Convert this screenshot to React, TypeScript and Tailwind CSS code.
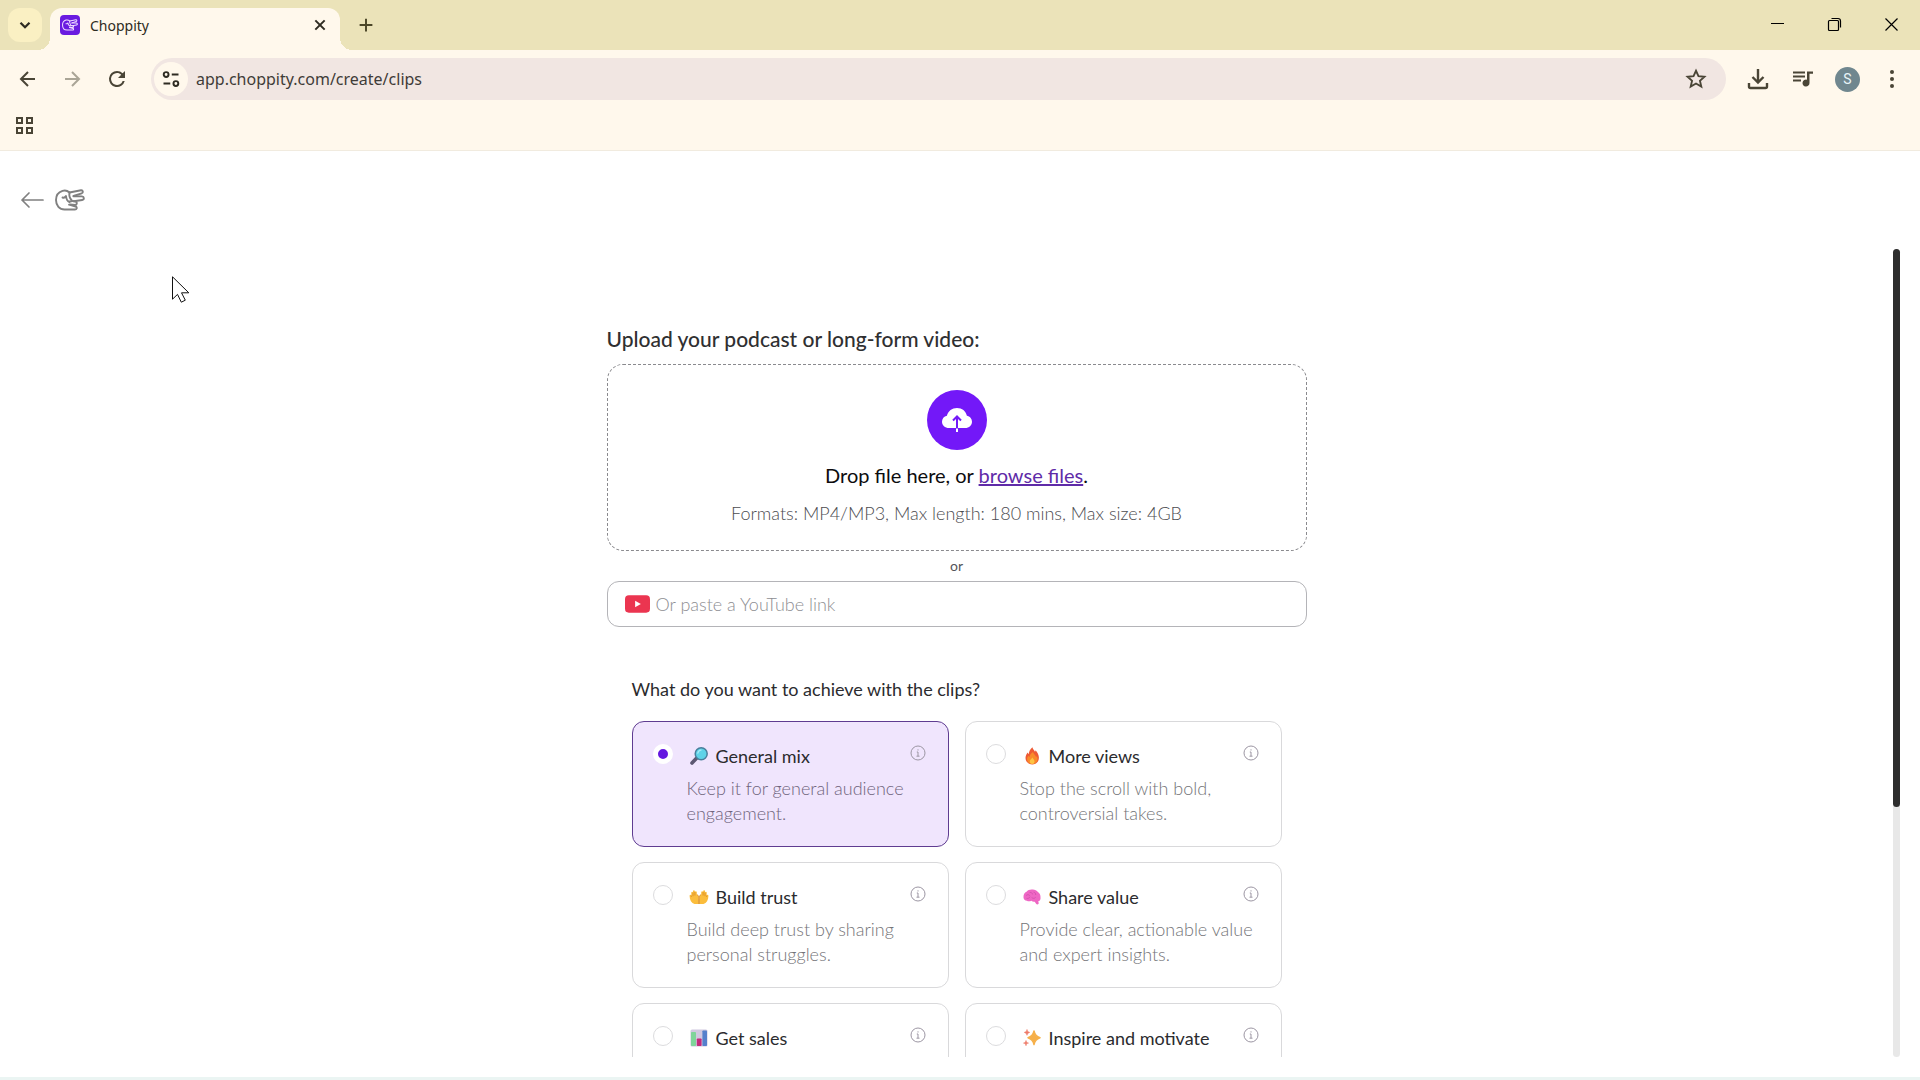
import { useState, type ReactNode } from "react";

type Goal = { id: string; title: string; text: string; icon: ReactNode };

const MagnifierIcon = () => (
  <svg viewBox="0 0 20 20" className="size-5" aria-hidden="true">
    <path d="M7.5 12.2 3 17" stroke="#5d5872" strokeWidth="3.6" strokeLinecap="round" />
    <circle cx="12.2" cy="7.8" r="6" fill="#5fd3e8" stroke="#4a7f9c" strokeWidth="1.5" />
    <path d="M8.8 7.2a3.7 3.7 0 0 1 3.2-3" stroke="#a6ecf6" strokeWidth="1.3" fill="none" strokeLinecap="round" />
  </svg>
);

const FireIcon = () => (
  <svg viewBox="0 0 20 20" className="size-5" aria-hidden="true">
    <path
      d="M10.400 1.200c.5 2.200 2 3 2.600 4.600.4-.5.5-1 .6-1.600 1.900 2.200 3.300 4.800 3.300 7.600 0 4-2.800 6.600-6.600 6.600s-6.800-2.600-6.800-6.400c0-2.300 1-4 2.100-5.600.3.8.6 1.300 1.100 1.700.2-2.800 1.600-5.200 3.700-6.900Z"
      fill="#ee5a34"
    />
    <path
      d="M11 6c.3 2 2.600 3 3.200 5.200.3-.3.5-.7.6-1.100.6 1 .8 2 .8 3 0 3-2.200 5-5.200 5s-5.300-1.900-5.300-4.800c0-1.500.6-2.600 1.300-3.600.3.6.6 1 1.100 1.300C7.700 9 9 7.400 11 6Z"
      fill="#f98a2b"
    />
    <path d="M10.600 11.500c.3 1.300 1.900 2 1.900 3.900 0 1.500-1 2.500-2.300 2.500s-2.400-1-2.400-2.400c0-1.800 1.500-2.400 2.800-4Z" fill="#fdc444" />
  </svg>
);

const HandsIcon = () => (
  <svg viewBox="0 0 20 20" className="size-5" aria-hidden="true">
    <g fill="#fbbd3c" strokeLinejoin="round">
      <path d="M9.700 17H5.500C2.500 16 .6 13 .6 9c0-1.700 1.300-1.700 1.700-.5V5.600c0-1.300 1.500-1.300 1.700 0V4.300c0-1.400 1.700-1.400 1.900 0v.8c.2-1.300 1.800-1.200 1.900.2v2.200c1.200.6 1.900 2 1.900 4z" />
      <path d="M10.300 17h4.200c3-1 4.900-4 4.900-8 0-1.700-1.300-1.700-1.700-.5V5.600c0-1.300-1.500-1.300-1.700 0V4.300c0-1.400-1.700-1.400-1.900 0v.8c-.2-1.300-1.800-1.200-1.900.2v2.200c-1.200.6-1.900 2-1.900 4z" />
      <path
        d="M9.900 17v-5.500c0-2-.6-3.300-2-4M10.100 17v-5.500c0-2 .6-3.300 2-4M2.300 8.500v1.500M4 5.600v3.600M5.900 5v3.500M17.700 8.500v1.500M16 5.600v3.600M14.100 5v3.500"
        fill="none"
        stroke="#d98a24"
        strokeWidth=".8"
      />
    </g>
  </svg>
);

const BrainIcon = () => (
  <svg viewBox="0 0 20 20" className="size-5" aria-hidden="true">
    <path
      d="M1.500 10.500C1.300 7.600 2.600 5.600 4.500 4.800 5.800 3 8 2.300 10.200 2.500c2.300-.2 4.500.7 5.700 2.500 1.800 1 2.800 3.200 2.600 5.400.3 2-.7 3.600-2.300 3.900l.5 1.700c.3 1.400-1.800 1.900-2.600.7l-1.400-2c-1.500.2-2.500-.2-3.300-.9-1.500.7-3.300.8-4.500 0-2-.2-3.300-1.500-3.400-3.300Z"
      fill="#ee67c4"
    />
    <path
      d="M4.500 8.200c1-.9 2.200-.7 3 .2M8 5.500c1.200-.3 2.200.3 2.500 1.500M12 5.300c1.300.2 1.900 1.300 1.700 2.300M5 11.500c1.300.2 2.400-.4 2.900-1.500M10 10.800c1.200.9 2.500.8 3.400-.2"
      fill="none"
      stroke="#d450ae"
      strokeWidth=".9"
      strokeLinecap="round"
    />
  </svg>
);

const ChartIcon = () => (
  <svg viewBox="0 0 20 20" className="size-5" aria-hidden="true">
    <rect x="1.500" y="1.500" width="17" height="17" rx="1.500" fill="#d0c8e0" />
    <rect x="2" y="4" width="5" height="14" rx=".8" fill="#7fd49a" />
    <rect x="7.800" y="10.500" width="4.800" height="7.500" rx=".8" fill="#c42a7c" />
    <rect x="13.400" y="2.500" width="4.600" height="15.500" rx=".8" fill="#5580cc" />
  </svg>
);

const SparklesIcon = () => (
  <svg viewBox="0 0 20 20" className="size-5" aria-hidden="true">
    <path d="M12 3c.8 4.200 2.200 5.600 6 6.700-3.800 1.200-5.200 2.600-6 6.800-.8-4.200-2.200-5.600-6-6.800 3.800-1.100 5.200-2.500 6-6.700Z" fill="#f6b04a" stroke="#f6b04a" strokeWidth="1.500" strokeLinejoin="round" />
    <path d="M5 1.500c.4 1.800 1 2.400 2.700 2.900C6 4.900 5.400 5.500 5 7.300c-.4-1.800-1-2.400-2.700-2.900C4 3.900 4.600 3.300 5 1.500ZM4 12.500c.3 1.600.9 2.200 2.500 2.600-1.600.4-2.200 1-2.500 2.600-.3-1.600-.9-2.200-2.500-2.600 1.600-.4 2.200-1 2.500-2.600Z" fill="#ee7a68" stroke="#ee7a68" strokeWidth=".6" strokeLinejoin="round" />
  </svg>
);

const goals: Goal[] = [
  { id: "general", title: "General mix", text: "Keep it for general audience engagement.", icon: <MagnifierIcon /> },
  { id: "views", title: "More views", text: "Stop the scroll with bold, controversial takes.", icon: <FireIcon /> },
  { id: "trust", title: "Build trust", text: "Build deep trust by sharing personal struggles.", icon: <HandsIcon /> },
  { id: "value", title: "Share value", text: "Provide clear, actionable value and expert insights.", icon: <BrainIcon /> },
  { id: "sales", title: "Get sales", text: "", icon: <ChartIcon /> },
  { id: "inspire", title: "Inspire and motivate", text: "", icon: <SparklesIcon /> },
];

function HandLogo({ className }: { className: string }) {
  return (
    <svg viewBox="0 0 30 22" className={className} fill="none" stroke="currentColor" strokeWidth="1.900" strokeLinecap="round" strokeLinejoin="round" aria-hidden="true">
      <path d="M14.500 3.500C12.500 1.600 10 1 7.500 1.800 3.500 3 1 6.500 1 11c0 5.500 3.500 9.500 8.500 9.500H20c1.800 0 2.200-1.700 1.200-3" />
      <path d="M14.500 3.500 26 1.300c2-.3 2.600 2.400.7 3L18.500 7" />
      <path d="M18.500 7.200 27 7.400c2.300.1 2.500 3.300.2 3.600l-8.400 1.300" />
      <path d="M7.500 8.500c1.800.6 2.800-.1 3.500-1.500.3 3.200 1.300 5.200 3.500 6" />
      <path d="M14.500 3.500c-.5 3 .5 6 2 7.500" />
      <path d="M14.800 12.500c2.500-.8 5-.3 6.500.5 1.200 1.200.3 2.900-1.200 2.900l-5-.5M14 15.700l6.700 1.800" />
    </svg>
  );
}

function Svg({ children, className = "size-6", width = 2 }: { children: ReactNode; className?: string; width?: number }) {
  return (
    <svg viewBox="0 0 24 24" className={className} fill="none" stroke="currentColor" strokeWidth={width} aria-hidden="true">
      {children}
    </svg>
  );
}

function BrowserTabs() {
  return (
    <div className="flex h-[50px] items-end bg-[#ebe3b9] text-[#2e2b22]">
      <button aria-label="Search tabs" className="mb-2 ml-2 flex size-[34px] items-center justify-center rounded-xl bg-[#faf0c3]">
        <Svg className="size-[18px]" width={3}>
          <path d="m6 9 6 6 6-6" />
        </Svg>
      </button>
      <div className="relative ml-2 flex h-[42px] w-[290px] items-center rounded-t-xl bg-[#fff8ec] pr-3 pl-[10px]">
        <span className="absolute bottom-0 -left-3 size-3 bg-[radial-gradient(circle_at_0_0,transparent_12px,#fff8ec_12px)]" />
        <span className="absolute -right-3 bottom-0 size-3 bg-[radial-gradient(circle_at_100%_0,transparent_12px,#fff8ec_12px)]" />
        <span className="mb-2 flex size-5 items-center justify-center rounded bg-[#6a1be0] text-[#f0dcff]">
          <HandLogo className="h-3 w-4" />
        </span>
        <span className="mb-[6px] ml-[10px] flex-1 font-['Noto_Sans','Open_Sans',sans-serif] text-sm leading-5">Choppity</span>
        <button aria-label="Close tab" className="mb-2">
          <Svg className="size-4" width={3}>
            <path d="m5 5 14 14M19 5 5 19" />
          </Svg>
        </button>
      </div>
      <button aria-label="New tab" className="mb-4 ml-[17px] text-[#4c4728]">
        <Svg className="size-[18px]" width={2.600}>
          <path d="M12 3.500v17M3.500 12h17" />
        </Svg>
      </button>
      <div className="mb-[18px] ml-auto flex items-center gap-[42px] pr-[21px] text-black">
        <button aria-label="Minimize">
          <svg viewBox="0 0 15 15" className="size-[15px]" fill="none" stroke="currentColor" aria-hidden="true">
            <path d="M1 6.500h13" />
          </svg>
        </button>
        <button aria-label="Restore">
          <svg viewBox="0 0 15 15" className="size-[15px]" fill="none" stroke="currentColor" strokeWidth="1.200" aria-hidden="true">
            <rect x="1.500" y="3.500" width="10" height="10" rx="1" />
            <path d="M4.500 1.500h6.500a2.500 2.500 0 0 1 2.500 2.500v6.500" />
          </svg>
        </button>
        <button aria-label="Close window">
          <svg viewBox="0 0 15 15" className="size-[15px]" fill="none" stroke="currentColor" strokeWidth="1.200" aria-hidden="true">
            <path d="m1.500 1.500 12 12M13.500 1.500l-12 12" />
          </svg>
        </button>
      </div>
    </div>
  );
}

function Toolbar() {
  return (
    <div className="border-b border-[#f1ebdf] bg-[#fff8ec] text-[#4a4536]">
      <div className="flex items-center pt-2 pr-4 pl-4">
        <button aria-label="Back">
          <Svg width={2}>
            <path d="M19 12H5M12 5l-7 7 7 7" />
          </Svg>
        </button>
        <button aria-label="Forward" className="ml-5 text-[#aaa596]">
          <Svg width={2}>
            <path d="M5 12h14M12 5l7 7-7 7" />
          </Svg>
        </button>
        <button aria-label="Reload" className="ml-[21px]">
          <svg viewBox="0 0 24 24" className="size-6" fill="currentColor" aria-hidden="true">
            <path d="M17.650 6.350A7.960 7.960 0 0 0 12 4a8 8 0 1 0 7.730 10h-2.080A6 6 0 1 1 12 6c1.660 0 3.140.69 4.220 1.780L13 11h7V4z" />
          </svg>
        </button>
        <div className="ml-[22px] flex h-[42px] flex-1 items-center rounded-full bg-[#f1e6e2] pr-[19px] pl-[3px]">
          <button aria-label="View site information" className="flex size-[34px] items-center justify-center rounded-full bg-[#fff8ec] text-[#2e2b22]">
            <Svg className="size-[18px]" width={2.600}>
              <circle cx="5.500" cy="6" r="3.200" />
              <path d="M13 6h9M2 18h9" />
              <circle cx="18.500" cy="18" r="3.200" />
            </Svg>
          </button>
          <input
            aria-label="Address"
            defaultValue="app.choppity.com/create/clips"
            className="ml-2 min-w-0 flex-1 bg-transparent font-['Noto_Sans','Open_Sans',sans-serif] text-base leading-6 text-[#3f3c38] outline-none"
          />
          <button aria-label="Bookmark this page">
            <Svg className="size-[22px]" width={2}>
              <path d="m12 3 2.700 6 6.500.6-4.900 4.300 1.500 6.400L12 16.900l-5.800 3.400 1.500-6.400L2.800 9.600 9.300 9z" />
            </Svg>
          </button>
        </div>
        <button aria-label="Downloads" className="ml-5">
          <Svg width={2.400}>
            <path d="M12 2v13M6.500 10l5.500 5.500L17.500 10M3 16v3.500c0 1 .5 1.500 1.500 1.500h15c1 0 1.500-.5 1.500-1.500V16" />
          </Svg>
        </button>
        <button aria-label="Media controls" className="ml-[21px]">
          <svg viewBox="0 0 24 24" className="size-6" fill="currentColor" aria-hidden="true">
            <path d="M2 4.500h12v2H2zM2 8.500h12v2H2zM2 12.500h8v2H2zM16 4.500h6v2.300h-3.500V16a3.500 3.500 0 1 1-2.500-3.300z" />
          </svg>
        </button>
        <button aria-label="Profile" className="ml-5 flex size-[25px] items-center justify-center rounded-full bg-[#70878f] font-[Roboto,sans-serif] text-sm text-[#e8f4f8]">
          S
        </button>
        <button aria-label="Menu" className="ml-5">
          <svg viewBox="0 0 24 24" className="size-6" fill="currentColor" aria-hidden="true">
            <circle cx="12" cy="5" r="2" />
            <circle cx="12" cy="12" r="2" />
            <circle cx="12" cy="19" r="2" />
          </svg>
        </button>
      </div>
      <div className="flex h-[50px] items-center pl-[14px]">
        <button aria-label="Apps">
          <svg viewBox="0 0 20 20" className="size-5" fill="none" stroke="currentColor" strokeWidth="2" aria-hidden="true">
            <path d="M3 3h5v5H3zM13 3h5v5h-5zM3 13h5v5H3zM13 13h5v5h-5z" />
          </svg>
        </button>
      </div>
    </div>
  );
}

function GoalCard({ goal, checked, onPick }: { goal: Goal; checked: boolean; onPick: () => void }) {
  return (
    <div className={checked ? "flex h-[126px] rounded-xl border border-[#5f3c91] bg-[#f0e5fd] pr-[22px] pl-5" : "flex h-[126px] rounded-xl border border-[#d9d9db] bg-white pr-[22px] pl-5"}>
      <input
        type="radio"
        name="goal"
        id={goal.id}
        checked={checked}
        onChange={onPick}
        className="mt-[22px] size-5 shrink-0 appearance-none rounded-full border border-[#dcdcde] bg-white checked:border-[5px] checked:border-white checked:bg-[#6417e0]"
      />
      <label htmlFor={goal.id} className="ml-[14px] min-w-0 flex-1 pt-[22px]">
        <span className="flex items-center gap-[7px] pl-[2px] text-lg leading-6 text-[#2b2b2e]">
          {goal.icon}
          {goal.title}
        </span>
        {goal.text && (
          <span className={checked ? "mt-2 -mr-5 block text-lg leading-[25px] font-light text-[#6f647c]" : "mt-2 -mr-5 block text-lg leading-[25px] font-light text-[#747478]"}>{goal.text}</span>
        )}
      </label>
      <button aria-label={`About ${goal.title}`} className="mt-[23px] size-4 shrink-0 text-[#9c96a3]">
        <svg viewBox="0 0 16 16" className="size-4" fill="none" stroke="currentColor" aria-hidden="true">
          <circle cx="8" cy="8" r="7" />
          <path d="M6.800 7H8v4M6.500 11.200h3M8 4.300v1.200" />
        </svg>
      </button>
    </div>
  );
}

export default function App() {
  const [picked, setPicked] = useState("general");
  return (
    <div className="flex h-screen flex-col bg-white font-[Lato,sans-serif]">
      <BrowserTabs />
      <Toolbar />
      <header className="flex h-[98px] shrink-0 items-center gap-[11px] pl-5 text-[#808080]">
        <a href="#back" aria-label="Go back">
          <svg viewBox="0 0 24 24" className="size-6" fill="none" stroke="currentColor" strokeWidth="1.700" strokeLinecap="round" strokeLinejoin="round" aria-hidden="true">
            <path d="M23 12H2M9 5l-7 7 7 7" />
          </svg>
        </a>
        <a href="#home" aria-label="Home">
          <HandLogo className="h-[22px] w-[30px]" />
        </a>
      </header>
      <div className="flex min-h-0 flex-1 pr-5">
        <main className="min-h-0 flex-1 overflow-y-auto pl-5 [scrollbar-width:none]">
          <div className="mx-auto max-w-[700px] pt-[75px]">
            <h1 className="text-[21px] leading-[30px] font-medium text-[#2f2f31]">Upload your podcast or long-form video:</h1>
            <section className="mt-[10px] flex h-[187px] flex-col items-center rounded-2xl border border-dashed border-[#8a8a8e] pt-[25px]">
              <div className="flex size-[60px] items-center justify-center rounded-full bg-[#7318f8]">
                <svg viewBox="0 0 30 26" className="h-[26px] w-[30px]" aria-hidden="true">
                  <path d="M7 21C3 21 0 18.300 0 14.700c0-3 2-5.400 4.900-6C6.200 4 10 1 15 1c5.200 0 8.700 3 9.900 7.700 2.900.5 5.100 3 5.100 6 0 3.500-2.900 6.300-6.800 6.300z" fill="#fff" />
                  <path d="M15 21V10M11 13.500l4-4 4 4" fill="none" stroke="#7318f8" strokeWidth="2" />
                  <path d="M14 21.500h2V25h-2z" fill="#fff" />
                </svg>
              </div>
              <p className="mt-[10px] text-xl leading-[30px] text-[#0c0c0e]">
                Drop file here, or{" "}
                <a href="#browse" className="text-[#5f2ba8] underline">
                  browse files
                </a>
                .
              </p>
              <p className="mt-2 text-lg leading-[30px] font-light text-[#4c4c50]">Formats: MP4/MP3, Max length: 180 mins, Max size: 4GB</p>
            </section>
            <p className="py-[5px] text-center text-sm leading-5 text-[#55555a]">or</p>
            <div className="flex h-[46px] items-center gap-[6px] rounded-xl border border-[#b4b4b8] px-4">
              <svg viewBox="0 0 26 18" className="ml-px h-[18px] w-[25px]" aria-hidden="true">
                <rect width="26" height="18" rx="4" fill="#eb3550" />
                <path d="m10.500 5.500 6 3.500-6 3.500z" fill="#fff" />
              </svg>
              <input
                aria-label="YouTube link"
                placeholder="Or paste a YouTube link"
                className="min-w-0 flex-1 bg-transparent text-lg font-light outline-none placeholder:text-[#8e8e92]"
              />
            </div>
            <fieldset className="px-[25px] pt-[47px] pb-[120px]">
              <legend className="float-left w-full text-lg leading-[30px] text-[#2b2b2e]">What do you want to achieve with the clips?</legend>
              <div className="grid w-full grid-cols-2 gap-x-4 gap-y-[15px] pt-[17px]">
                {goals.map((goal) => (
                  <GoalCard key={goal.id} goal={goal} checked={picked === goal.id} onPick={() => setPicked(goal.id)} />
                ))}
              </div>
            </fieldset>
          </div>
        </main>
        <div className="w-[7px] rounded-full bg-[#e8e8e8]">
          <div className="h-[69%] rounded-full bg-[#2d2d2d]" />
        </div>
      </div>
      <footer className="mt-5 h-[3px] shrink-0 bg-[#ebf5f3]" />
      <svg viewBox="0 0 18 27" className="pointer-events-none absolute top-[276px] left-[172px] h-[27px] w-[18px]" aria-hidden="true">
        <path d="M.5.800v22.400l5-4.800 3.800 7.800 4-2-3.800-7.400h7.300z" fill="#fff" stroke="#111" />
      </svg>
    </div>
  );
}
